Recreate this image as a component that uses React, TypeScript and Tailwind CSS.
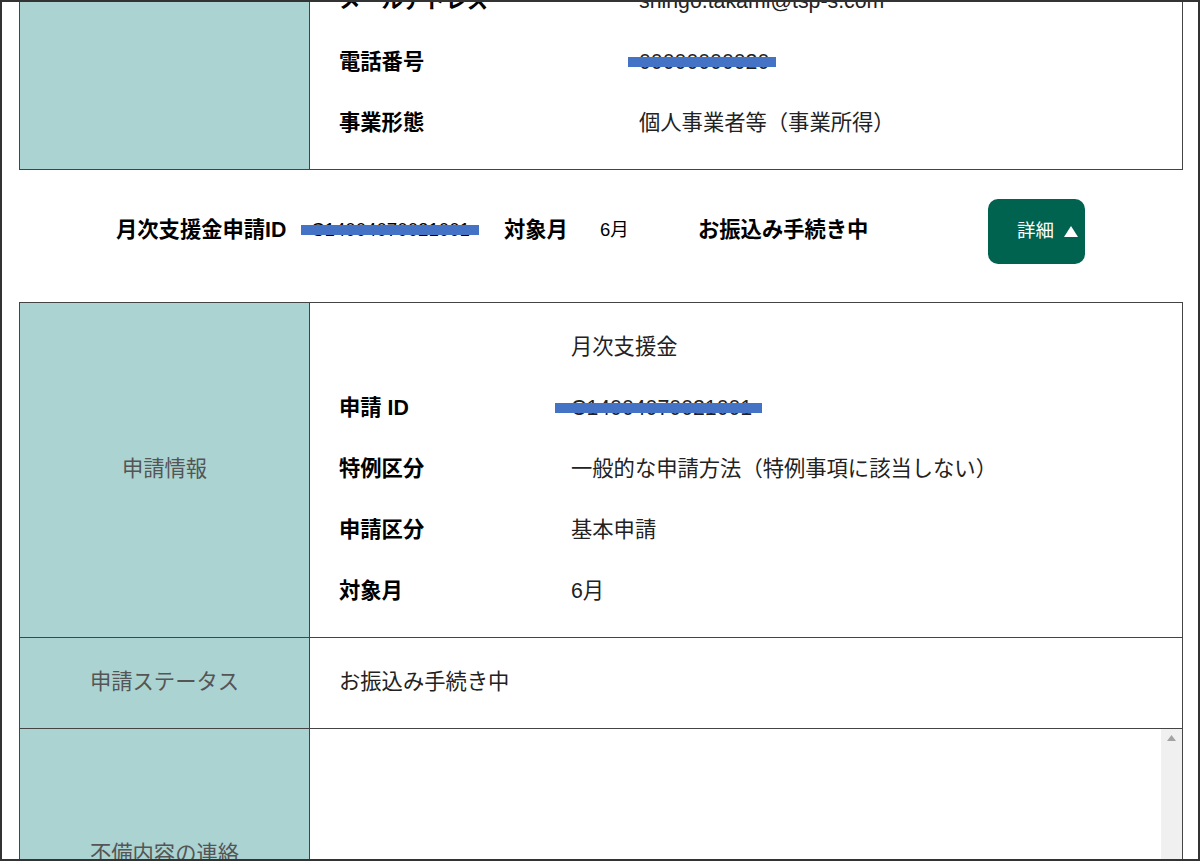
const font = "[font-family:'Liberation_Sans','Noto_Sans_CJK_JP',sans-serif]";

function Redacted({ text, barLeft, barWidth }: { text: string; barLeft: number; barWidth: number }) {
  return (
    <span className="relative inline-block whitespace-nowrap">
      {text}
      <span
        className="absolute top-1/2 h-[10px] -translate-y-1/2 bg-[#4472c4]"
        style={{ left: barLeft, width: barWidth }}
      />
    </span>
  );
}

function Field({ label, children, valueWidth }: { label?: string; children: React.ReactNode; valueWidth: string }) {
  return (
    <div className="flex h-[61px] shrink-0 items-center">
      <div className={`${valueWidth} shrink-0 font-bold text-black`}>{label}</div>
      <div className="text-[#222]">{children}</div>
    </div>
  );
}

function HeadCell({ children, className = "" }: { children?: React.ReactNode; className?: string }) {
  return (
    <div className={`flex w-[290px] shrink-0 items-center justify-center border-r border-[#444] bg-[#aad3d1] text-[#555] ${className}`}>
      {children}
    </div>
  );
}

export default function App() {
  return (
    <div className={`${font} h-[861px] overflow-hidden border-2 border-[#333] bg-white pl-[17px] pr-[15px] text-[21.3px] leading-none`}>
      <div className="flex h-[168px] overflow-hidden border-x border-b border-[#444]">
        <HeadCell />
        <div className="flex flex-1 flex-col justify-end pb-[15px] pl-[29px]">
          <Field label="メールアドレス" valueWidth="w-[300px]">shingo.takami@tsp-s.com</Field>
          <Field label="電話番号" valueWidth="w-[300px]">
            <Redacted text="00000000020" barLeft={-11} barWidth={148} />
          </Field>
          <Field label="事業形態" valueWidth="w-[300px]">個人事業者等（事業所得）</Field>
        </div>
      </div>

      <div className="flex h-[132px] items-start pl-[97px] pt-[29px] font-bold text-black">
        <div className="flex h-[63px] items-center whitespace-nowrap">
          <span className="w-[195px]">月次支援金申請ID</span>
          <span className="w-[193px] text-[18.7px] font-normal">
            <Redacted text="C14004070021001" barLeft={-10} barWidth={178} />
          </span>
          <span className="w-[96px]">対象月</span>
          <span className="w-[98px] text-[18.5px] font-normal">6月</span>
          <span className="w-[290px]">お振込み手続き中</span>
        </div>
        <button className="flex h-[65px] w-[97px] items-center gap-[10px] rounded-[10px] bg-[#00634f] pl-[29px] text-[18.5px] font-normal text-white">
          詳細
          <svg width="14" height="11" viewBox="0 0 14 11"><path d="M7 0 14 11H0Z" fill="#fff" /></svg>
        </button>
      </div>

      <div className="border-x border-t border-[#444]">
        <div className="flex h-[335px] border-b border-[#444]">
          <HeadCell>申請情報</HeadCell>
          <div className="flex-1 pl-[29px] pt-[14px]">
            <Field valueWidth="w-[232px]">月次支援金</Field>
            <Field label="申請 ID" valueWidth="w-[232px]">
              <Redacted text="C14004070021001" barLeft={-16} barWidth={207} />
            </Field>
            <Field label="特例区分" valueWidth="w-[232px]">一般的な申請方法（特例事項に該当しない）</Field>
            <Field label="申請区分" valueWidth="w-[232px]">基本申請</Field>
            <Field label="対象月" valueWidth="w-[232px]">6月</Field>
          </div>
        </div>
        <div className="flex h-[91px] border-b border-[#444]">
          <HeadCell>申請ステータス</HeadCell>
          <div className="flex flex-1 items-center pl-[29px] text-[#222]">お振込み手続き中</div>
        </div>
        <div className="flex h-[252px]">
          <HeadCell>不備内容の連絡</HeadCell>
          <div className="flex flex-1 justify-end">
            <div className="flex w-[21px] justify-center bg-[#f0f0f0] pt-[6px]">
              <svg width="9" height="6" viewBox="0 0 9 6"><path d="M4.5 0 9 6H0Z" fill="#a3a3a3" /></svg>
            </div>
          </div>
        </div>
      </div>
    </div>
  );
}
